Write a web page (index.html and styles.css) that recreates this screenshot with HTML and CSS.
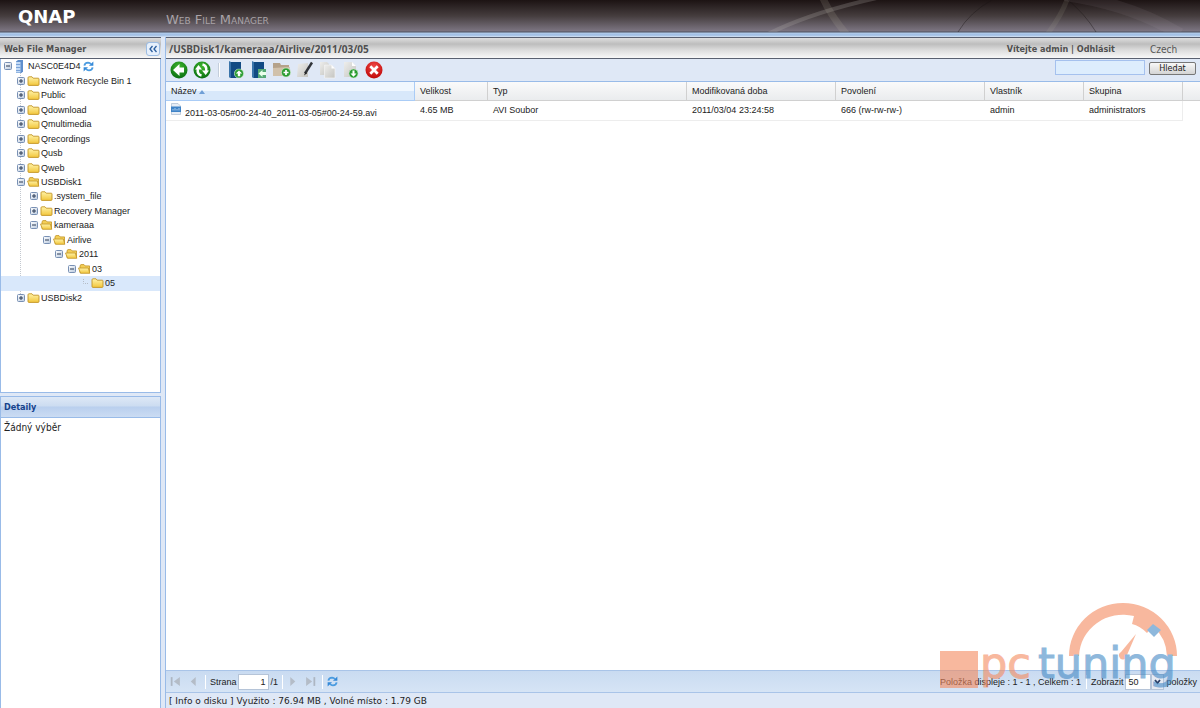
FILE: index.html
```html
<!DOCTYPE html>
<html lang="cs">
<head>
<meta charset="utf-8">
<title>Web File Manager</title>
<link rel="stylesheet" href="styles.css">
</head>
<body>
<svg class="defs" aria-hidden="true">
  <defs>
    <linearGradient id="gold" x1="0" y1="0" x2="0" y2="1"><stop offset="0" stop-color="#fff3a8"/><stop offset="1" stop-color="#f2c63c"/></linearGradient>
    <radialGradient id="green" cx=".5" cy=".3" r=".7"><stop offset="0" stop-color="#3fb52e"/><stop offset="1" stop-color="#0a7010"/></radialGradient>
    <radialGradient id="red" cx=".5" cy=".3" r=".7"><stop offset="0" stop-color="#f04a48"/><stop offset="1" stop-color="#c00808"/></radialGradient>
    <linearGradient id="box" x1="0" y1="0" x2="1" y2="1"><stop offset="0" stop-color="#fff"/><stop offset="1" stop-color="#b9c9de"/></linearGradient>
    <linearGradient id="paper" x1="0" y1="0" x2="1" y2="1"><stop offset="0" stop-color="#eeeeec"/><stop offset="1" stop-color="#c4c4c0"/></linearGradient>
  </defs>
  <symbol id="plus" viewBox="0 0 8 8"><rect x=".5" y=".5" width="7" height="7" rx="1" fill="url(#box)" stroke="#7890b4"/><path d="M2 4h4M4 2v4" stroke="#2b3a55"/></symbol>
  <symbol id="minus" viewBox="0 0 8 8"><rect x=".5" y=".5" width="7" height="7" rx="1" fill="url(#box)" stroke="#7890b4"/><path d="M2 4h4" stroke="#2b3a55"/></symbol>
  <symbol id="folder" viewBox="0 0 13 10"><path d="M1 8.500V1.800Q1 .8 2 .8h3l1.200 1.400h5Q12 2.200 12 3v5.500q0 .9-1 .9H2q-1 0-1-.9z" fill="url(#gold)" stroke="#c29425" stroke-width=".9"/></symbol>
  <symbol id="open" viewBox="0 0 13 10"><path d="M2 8.500V1.500L3 .6h3l1 1.300h4.500v6.500z" fill="#f3cf58" stroke="#c29425" stroke-width=".8"/><path d="M.5 4h9.800l1.500 5.300H2.500z" fill="url(#gold)" stroke="#c29425" stroke-width=".8"/></symbol>
  <symbol id="server" viewBox="0 0 8 13"><path d="M1 1.500L3 0h5v11.500L6.500 13H1z" fill="#5f8fcc"/><path d="M1 2h4.500v10.500H1z" fill="#c4dbf6"/><path d="M1 4.500h4.500M1 7.500h4.500M1 10.500h4.500" stroke="#7ba3d8"/></symbol>
  <symbol id="sync" viewBox="0 0 12 12"><path d="M1.500 5Q2 1.800 5.500 1.700q2 0 3 1.500M10.500 7q-.5 3.200-4 3.300-2 0-3-1.500" fill="none" stroke="#4a9be0" stroke-width="2"/><path d="M6.500 5.200h4.800V.6zM5.500 6.800H.7v4.600z" fill="#3489d8"/></symbol>
  <symbol id="back" viewBox="0 0 18 18"><circle cx="9" cy="9" r="8.500" fill="url(#green)"/><path d="M3 9l6.500-6v3.500H14v5H9.500V15z" fill="#fff"/></symbol>
  <symbol id="reload" viewBox="0 0 18 18"><circle cx="9" cy="9" r="8.500" fill="url(#green)"/><path d="M8.500 14.500Q4 13.500 4.800 8M9.500 3.500Q14 4.500 13.200 10" fill="none" stroke="#fff" stroke-width="2.500"/><path d="M2 8.500L5.500 4l3.500 4.500zM9 9.500h7L12.700 14z" fill="#fff"/></symbol>
  <symbol id="badge" viewBox="0 0 10 10"><circle cx="5" cy="5" r="4.600" fill="#2b9c32" stroke="#d5ecd3" stroke-width=".7"/></symbol>
  <symbol id="upload" viewBox="0 0 18 18"><path d="M2 1h12v16H4l-2-1z" fill="#124a83"/><path d="M2 0l2 1v16l-2-1z" fill="#3a74aa"/><use href="#badge" x="7" y="7.500" width="10" height="10"/><path d="M8.800 12.600l3.200-3.200 3.200 3.200h-2v2.600h-2.400v-2.600z" fill="#fff"/></symbol>
  <symbol id="download" viewBox="0 0 18 18"><path d="M2 1h12v16H4l-2-1z" fill="#124a83"/><path d="M2 0l2 1v16l-2-1z" fill="#3a74aa"/><path d="M8 8h8v9H8z" fill="#55a875"/><path d="M8.500 12.500l4-3.500v2H16v3h-3.500v2z" fill="#eaffea"/></symbol>
  <symbol id="newdir" viewBox="0 1 18 18"><path d="M0 3h7l1 2h8v10H0z" fill="#b5a28a"/><path d="M0 8l17-1-2 9H0z" fill="#d1c1ab"/><use href="#badge" x="8" y="7.500" width="10" height="10"/><path d="M10.500 12.500h5M13 10v5" stroke="#fff" stroke-width="1.700"/></symbol>
  <symbol id="rename" viewBox="0 0 18 18"><path d="M2 3l10-1v14H1z" fill="url(#paper)"/><path d="M16 1.500L9 12.500" stroke="#30343a" stroke-width="2.400"/><path d="M9.500 11L8 14.500l3-2.300z" fill="#222"/></symbol>
  <symbol id="copy" viewBox="0 0 18 18"><path d="M1 1h7l2 2v11H1z" fill="url(#paper)"/><path d="M5.500 4h7l3.500 3.500V17H5.500z" fill="url(#paper)" stroke="#f4f4f4" stroke-width=".7"/><path d="M12.500 4v3.500H16z" fill="#fff"/></symbol>
  <symbol id="move" viewBox="0 0 18 18"><path d="M2 1h8l4 4v11H2z" fill="url(#paper)"/><path d="M10 1v4h4z" fill="#fff"/><use href="#badge" x="6.500" y="7.500" width="10" height="10"/><path d="M11.500 15.800l-3-3.200h2V9.500h2v3.100h2z" fill="#fff"/></symbol>
  <symbol id="delete" viewBox="0 0 18 18"><circle cx="9" cy="9" r="8.500" fill="url(#red)"/><path d="M5.300 5.300l7.400 7.400M12.700 5.300l-7.400 7.400" stroke="#fff" stroke-width="2.700"/></symbol>
  <symbol id="video" viewBox="0 0 10 12"><path d="M.5.500h6.500L9.500 3v8.500h-9z" fill="#e6edf6" stroke="#aabbd0" stroke-width=".7"/><path d="M0 3.500h10v5.500H0z" fill="#3f83c7"/><path d="M2 7.500V6M4 7.500V5M6 7.500V6M8 7.500V5" stroke="#c9e3fa" stroke-width=".8"/></symbol>
  <symbol id="first" viewBox="0 0 10 10"><path d="M1.500 1v8" stroke="#adb6c2" stroke-width="1.600"/><path d="M9 1v8L3.500 5z" fill="#b4bcc7"/></symbol>
  <symbol id="prev" viewBox="0 0 10 10"><path d="M7 1v8L2.500 5z" fill="#b4bcc7"/></symbol>
  <symbol id="next" viewBox="0 0 10 10"><path d="M3 1v8l4.500-4z" fill="#b4bcc7"/></symbol>
  <symbol id="last" viewBox="0 0 10 10"><path d="M8.500 1v8" stroke="#adb6c2" stroke-width="1.600"/><path d="M1 1v8l5.500-4z" fill="#b4bcc7"/></symbol>
</svg>

<header class="banner">
  <svg class="arcs" viewBox="0 0 460 32" aria-hidden="true">
    <g fill="none">
      <path d="M24 36Q70 12 146-4" stroke="#b9b4ae" stroke-width="4" opacity=".24"/>
      <path d="M82-4Q90 15 108 36" stroke="#b9b4a0" stroke-width="7" opacity=".16"/>
      <path d="M328-3Q322 15 306 36" stroke="#b9b4a0" stroke-width="5" opacity=".12"/>
      <path d="M218 32Q230 12 252 0M328 0Q345 14 356 32" stroke="#1a1515" opacity=".4"/>
      <path d="M325-5Q390 4 440 34" stroke="#c9bfc9" stroke-width="12" opacity=".08"/>
    </g>
  </svg>
  <span class="brand">QNAP</span>
  <span class="product">Web File Manager</span>
</header>

<div class="workspace">
  <aside class="side">
    <div class="bar">
      <h1 class="bar-title">Web File Manager</h1>
      <button class="collapse" type="button" aria-label="Sbalit"><svg viewBox="0 0 12 12"><path d="M5.500 3L3 6l2.500 3M9.500 3L7 6l2.500 3" fill="none" stroke="#2d5f9f" stroke-width="1.300"/></svg></button>
    </div>
    <div class="tree-panel">
      <ul class="tree">
        <li class="node level-0"><svg class="toggle"><use href="#minus"/></svg><svg class="server"><use href="#server"/></svg><span>NASC0E4D4</span><svg class="sync"><use href="#sync"/></svg></li>
        <li class="node level-1"><svg class="toggle"><use href="#plus"/></svg><svg class="folder"><use href="#folder"/></svg><span>Network Recycle Bin 1</span></li>
        <li class="node level-1"><svg class="toggle"><use href="#plus"/></svg><svg class="folder"><use href="#folder"/></svg><span>Public</span></li>
        <li class="node level-1"><svg class="toggle"><use href="#plus"/></svg><svg class="folder"><use href="#folder"/></svg><span>Qdownload</span></li>
        <li class="node level-1"><svg class="toggle"><use href="#plus"/></svg><svg class="folder"><use href="#folder"/></svg><span>Qmultimedia</span></li>
        <li class="node level-1"><svg class="toggle"><use href="#plus"/></svg><svg class="folder"><use href="#folder"/></svg><span>Qrecordings</span></li>
        <li class="node level-1"><svg class="toggle"><use href="#plus"/></svg><svg class="folder"><use href="#folder"/></svg><span>Qusb</span></li>
        <li class="node level-1"><svg class="toggle"><use href="#plus"/></svg><svg class="folder"><use href="#folder"/></svg><span>Qweb</span></li>
        <li class="node level-1"><svg class="toggle"><use href="#minus"/></svg><svg class="folder"><use href="#open"/></svg><span>USBDisk1</span></li>
        <li class="node level-2"><svg class="toggle"><use href="#plus"/></svg><svg class="folder"><use href="#folder"/></svg><span>.system_file</span></li>
        <li class="node level-2"><svg class="toggle"><use href="#plus"/></svg><svg class="folder"><use href="#folder"/></svg><span>Recovery Manager</span></li>
        <li class="node level-2"><svg class="toggle"><use href="#minus"/></svg><svg class="folder"><use href="#open"/></svg><span>kameraaa</span></li>
        <li class="node level-3"><svg class="toggle"><use href="#minus"/></svg><svg class="folder"><use href="#open"/></svg><span>Airlive</span></li>
        <li class="node level-4"><svg class="toggle"><use href="#minus"/></svg><svg class="folder"><use href="#open"/></svg><span>2011</span></li>
        <li class="node level-5"><svg class="toggle"><use href="#minus"/></svg><svg class="folder"><use href="#open"/></svg><span>03</span></li>
        <li class="node level-6 selected"><svg class="toggle" viewBox="0 0 8 8"><path d="M2.500 0v4.500H8" fill="none" stroke="#b5bcc6" stroke-dasharray="1 1"/></svg><svg class="folder"><use href="#folder"/></svg><span>05</span></li>
        <li class="node level-1"><svg class="toggle"><use href="#plus"/></svg><svg class="folder"><use href="#folder"/></svg><span>USBDisk2</span></li>
      </ul>
    </div>
    <section class="details">
      <h2 class="details-title">Detaily</h2>
      <p class="details-body">Žádný výběr</p>
    </section>
  </aside>

  <main class="content">
    <div class="bar">
      <span class="bar-title path">/USBDisk1/kameraaa/Airlive/2011/03/05</span>
      <span class="bar-title">Vítejte admin | <a href="#logout">Odhlásit</a></span>
      <button class="language" type="button">Czech</button>
    </div>
    <div class="toolbar">
      <div class="tools">
        <button type="button" aria-label="Zpět"><svg><use href="#back"/></svg></button>
        <button type="button" aria-label="Obnovit"><svg><use href="#reload"/></svg></button>
        <i class="divider"></i>
        <button type="button" aria-label="Nahrát"><svg><use href="#upload"/></svg></button>
        <button type="button" aria-label="Stáhnout"><svg><use href="#download"/></svg></button>
        <button type="button" aria-label="Nová složka"><svg><use href="#newdir"/></svg></button>
        <button type="button" aria-label="Přejmenovat"><svg><use href="#rename"/></svg></button>
        <button type="button" aria-label="Kopírovat"><svg><use href="#copy"/></svg></button>
        <button type="button" aria-label="Přesunout"><svg><use href="#move"/></svg></button>
        <button type="button" aria-label="Smazat"><svg><use href="#delete"/></svg></button>
      </div>
      <form class="search">
        <input type="text" aria-label="Hledat soubor">
        <button type="button">Hledat</button>
      </form>
    </div>
    <div class="files">
      <table>
        <colgroup><col><col class="w-size"><col class="w-type"><col class="w-date"><col class="w-date"><col class="w-owner"><col class="w-owner"><col class="w-rest"></colgroup>
        <thead><tr><th class="sorted">Název <svg class="caret" viewBox="0 0 6 4"><path d="M0 4l3-4 3 4z" fill="#6f9fd6"/></svg></th><th>Velikost</th><th>Typ</th><th>Modifikovaná doba</th><th>Povolení</th><th>Vlastník</th><th>Skupina</th><th></th></tr></thead>
        <tbody><tr><td><span class="file"><svg><use href="#video"/></svg><span>2011-03-05#00-24-40_2011-03-05#00-24-59.avi</span></span></td><td>4.65 MB</td><td>AVI Soubor</td><td>2011/03/04 23:24:58</td><td>666 (rw-rw-rw-)</td><td>admin</td><td>administrators</td><td class="blank"></td></tr></tbody>
      </table>
    </div>
    <div class="pager">
      <button type="button" aria-label="První"><svg><use href="#first"/></svg></button>
      <button type="button" aria-label="Předchozí"><svg><use href="#prev"/></svg></button>
      <i class="divider"></i>
      <label for="page">Strana</label>
      <input id="page" type="text" value="1">
      <span class="total">/1</span>
      <i class="divider"></i>
      <button type="button" aria-label="Další"><svg><use href="#next"/></svg></button>
      <button type="button" aria-label="Poslední"><svg><use href="#last"/></svg></button>
      <i class="divider"></i>
      <button type="button" aria-label="Obnovit"><svg class="sync"><use href="#sync"/></svg></button>
      <div class="summary">
        <span>Položka displeje : 1 - 1 , Celkem : 1</span>
        <i class="divider"></i>
        <label for="count">Zobrazit</label>
        <span class="combo"><select id="count"><option>50</option></select><svg viewBox="0 0 11 14" aria-hidden="true"><path d="M3 5l2.500 3L8 5" fill="none" stroke="#2b3f66" stroke-width="1.800"/></svg></span>
        <span>položky</span>
      </div>
    </div>
    <footer class="status">[ Info o disku ] Využito : 76.94 MB , Volné místo : 1.79 GB</footer>
  </main>
</div>

<svg class="watermark" viewBox="0 0 250 96" aria-label="pctuning">
  <g class="orange">
    <path d="M0 49h38v37H0z"/>
    <path d="M129 54a54 53 0 0 1 108 0h-10a44 43 0 0 0-14-30l-6 7q-7-7-15-9l2-8a44 43 0 0 0-55 40z"/>
    <path d="M196 32l-9 21a4 4 0 1 1-6-3z"/>
  </g>
  <path class="blue" d="M207 28l6-6 8 6-7 7z"/>
  <text class="orange" x="40" y="76">pc</text>
  <text class="blue" x="98" y="76">tuning</text>
</svg>
</body>
</html>
```
FILE: styles.css
```css
* { box-sizing: border-box; }
body {
  margin: 0;
  min-height: 100vh;
  display: flex;
  flex-direction: column;
  position: relative;
  overflow: hidden;
  background: #dfe8f6;
  color: #222;
  font: 9px/14px "Liberation Sans", Arial, sans-serif;
}
svg { display: block; flex: none; }
button { padding: 0; border: 0; background: none; font: inherit; color: inherit; }
input, select { font: inherit; color: inherit; }
.defs { position: absolute; width: 0; height: 0; }

.banner {
  position: relative;
  display: flex;
  height: 37px;
  padding-left: 18px;
  background: linear-gradient(#1c1313, #453d3e 16px, #7c7582 31px, #4c5160 32px, #b3cdec 33px, #9dbce3 35px, #d6e4f5 37px);
}
.arcs { position: absolute; right: 0; top: 0; width: 460px; height: 32px; }
.brand { width: 148px; padding-top: 8px; color: #fff; font: bold 18px/18px "DejaVu Sans", sans-serif; }
.product { padding-top: 12px; color: #a9a3a8; font: 13px/16px "DejaVu Sans", sans-serif; font-variant: small-caps; }

.workspace { flex: 1; display: grid; grid-template-columns: 161px 1fr; column-gap: 4px; min-height: 0; }
.side, .content { display: flex; flex-direction: column; min-width: 0; }
.content { border-left: 1px solid #99bbe8; }
.bar {
  display: flex;
  align-items: center;
  height: 22px;
  padding: 1px 4px 0 4px;
  border-top: 1px solid #596070;
  border-bottom: 1px solid #596070;
  background: linear-gradient(#dedede, #bdbdbd 6px, #dcdcdc 12px, #f8f8f8);
}
.bar-title { margin: 0; color: #4f4f4f; font: bold 9px/16px "DejaVu Sans Condensed", "DejaVu Sans", sans-serif; }
.bar-title a { color: inherit; text-decoration: none; }
.path { flex: 1; font: bold 10px/16px "Noto Sans", sans-serif; }
.content .bar { padding-left: 3px; }
.collapse { width: 12px; height: 12px; margin-left: auto; margin-right: -2px; border-radius: 2px; background: #e6f0fc; outline: 1px solid #9dbde4; }
.language { width: 46px; margin-left: 35px; padding-top: 2px; color: #555; font: 10px/14px "DejaVu Sans Condensed", sans-serif; text-align: left; }

.tree-panel { flex: 0 0 334px; border: 1px solid #99bbe8; border-top: 0; background: #fff; }
.tree {
  display: grid;
  grid-auto-rows: 1fr;
  height: 246px;
  margin: 0;
  padding: 0;
  list-style: none;
  background: repeating-linear-gradient(#c3c8cf 0 1px, transparent 1px 2px) 19px 10px / 1px 225px no-repeat;
}
.node { display: flex; align-items: center; white-space: nowrap; }
.toggle { width: 8px; height: 8px; margin-right: 2px; }
.folder { width: 13px; height: 10px; margin-right: 1px; }
.server { width: 8px; height: 13px; margin: 0 5px 0 1px; }
.sync { width: 11px; height: 11px; margin-left: 2px; }
.level-0 { padding-left: 3px; }
.level-1 { padding-left: 16px; }
.level-2 { padding-left: 29px; }
.level-3 { padding-left: 42px; }
.level-4 { padding-left: 54px; }
.level-5 { padding-left: 67px; }
.level-6 { padding-left: 80px; }
.selected { background: #d9e8fb; }

.details { flex: 1; margin-top: 3px; border: 1px solid #99bbe8; border-bottom: 0; background: #fff; }
.details-title {
  margin: 0;
  padding: 2px 3px;
  border-bottom: 1px solid #99bbe8;
  color: #15428b;
  background: linear-gradient(#dde8f6, #ccdcf1 45%, #b9cfee 50%, #cbdcf3);
  font: bold 9px/16px "DejaVu Sans Condensed", sans-serif;
}
.details-body { margin: 0; padding: 2px 3px; font: 10px/15px "DejaVu Sans Condensed", sans-serif; }

.toolbar { display: flex; justify-content: space-between; height: 23px; padding: 1px 4px 0; border-bottom: 1px solid #99bbe8; }
.tools { display: flex; align-items: center; gap: 5px; height: 20px; }
.tools svg { width: 18px; height: 18px; }
.divider { width: 1px; height: 14px; background: #c4cedb; border-right: 1px solid #fff; }
.tools .divider { width: 2px; margin: 0 2px; }
.search { display: flex; gap: 4px; }
.search input { width: 90px; height: 15px; border: 1px solid #a5c1ee; background: #ddedfd; }
.search button { width: 47px; height: 13px; margin-top: 2px; border: 1px solid #777; border-radius: 2px; background: linear-gradient(#f8f8f8, #d4d4d4); font: 9px/11px "DejaVu Sans Condensed", sans-serif; }

.files { flex: 1; background: #fff; }
table { width: 100%; table-layout: fixed; border-collapse: separate; border-spacing: 0; }
.w-size { width: 73px; }
.w-type { width: 199px; }
.w-date { width: 149px; }
.w-owner { width: 99px; }
.w-rest { width: 17px; }
th, td { padding: 0 0 0 5px; text-align: left; font-weight: normal; white-space: nowrap; }
th { height: 19px; border-right: 1px solid #d0d0d0; border-bottom: 1px solid #d0d0d0; background: linear-gradient(#fafafa, #eaecee); }
th:last-child { border-right: 0; }
.sorted { border-right-color: #aaccf6; border-bottom-color: #aaccf6; background: linear-gradient(#f0f7fe 50%, #d8e8fa 51%); }
.caret { display: inline-block; width: 6px; height: 4px; }
td { height: 20px; padding-bottom: 2px; border-bottom: 1px solid #ededed; }
td:nth-child(7) { border-right: 1px solid #ededed; }
.blank { border-bottom: 0; }
.file { display: flex; align-items: flex-start; gap: 4px; height: 17px; }
.file svg { width: 10px; height: 12px; margin-top: 2px; }
.file span { padding-top: 5px; }

.pager {
  display: flex;
  align-items: center;
  height: 23px;
  padding: 0 3px 0 4px;
  border-top: 1px solid #a9c4e8;
  border-bottom: 1px solid #a9c4e8;
  background: linear-gradient(#c9dbf1, #d6e4f5);
}
.pager button { margin-right: 7px; }
.pager button svg { width: 11px; height: 11px; margin: 0; }
.pager .divider { background: #aecbf0; margin-right: 4px; }
.pager input { width: 31px; height: 16px; margin: 0 2px 0 1px; border: 1px solid #b5c4d8; background: #fff; text-align: right; }
.total { width: 11px; }
.pager button + .divider { margin-left: -1px; }
.summary { display: flex; align-items: center; gap: 1px; margin-left: auto; white-space: nowrap; }
.summary .divider { margin: 0 3px 0 4px; }
.combo { display: flex; height: 16px; margin: 0 1px; }
.combo select { width: 26px; padding: 0 2px; appearance: none; border: 1px solid #b5c4d8; border-radius: 0; background: #fff; }
.combo svg { width: 13px; height: 16px; background: #e4eaf3; border: 1px solid #b5c4d8; }
.status { height: 15px; padding-left: 3px; font: 9px/16px "DejaVu Sans", sans-serif; }

.watermark { position: absolute; right: 10px; bottom: 10px; width: 250px; height: 96px; pointer-events: none; opacity: .6; font: 43px "DejaVu Sans", sans-serif; }
.watermark text { stroke-width: 1px; }
.orange { fill: #f58a5e; }
.blue { fill: #4489c5; }
.watermark text.orange { stroke: #f58a5e; }
.watermark text.blue { stroke: #4489c5; }
```
